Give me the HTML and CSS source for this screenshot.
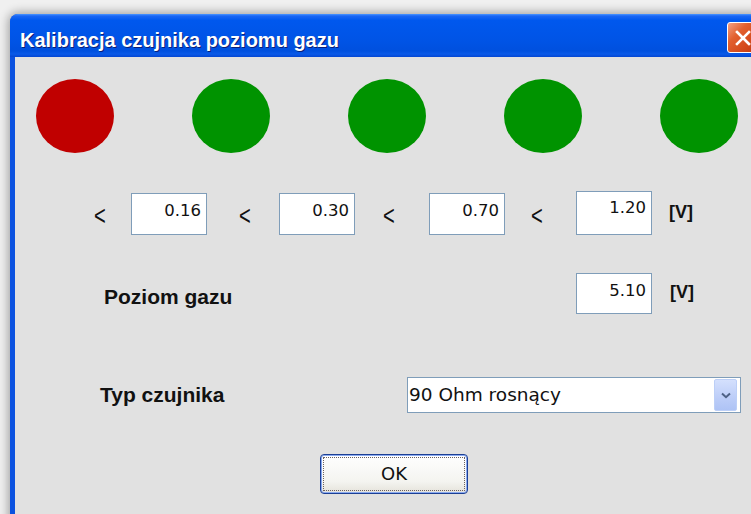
FILE: index.html
```html
<!DOCTYPE html>
<html lang="pl">
<head>
<meta charset="utf-8">
<title>Kalibracja czujnika poziomu gazu</title>
<link rel="stylesheet" href="styles.css">
</head>
<body>
<div class="window">
  <div class="titlebar">
    <span class="title">Kalibracja czujnika poziomu gazu</span>
    <button class="close" aria-label="Zamknij">
      <svg width="16" height="16" viewBox="0 0 16 16"><path d="M2 2 L14 14 M14 2 L2 14" stroke="#fff" stroke-width="2.6" stroke-linecap="square"/></svg>
    </button>
  </div>
  <div class="client">
    <div class="lamps">
      <span class="lamp lamp-alarm"></span>
      <span class="lamp lamp-ok"></span>
      <span class="lamp lamp-ok"></span>
      <span class="lamp lamp-ok"></span>
      <span class="lamp lamp-ok"></span>
    </div>

    <div class="thresholds">
      <span class="lt">&lt;</span><div class="field">0.16</div>
      <span class="lt">&lt;</span><div class="field">0.30</div>
      <span class="lt">&lt;</span><div class="field">0.70</div>
      <span class="lt">&lt;</span><div class="field field-tall">1.20</div>
      <span class="unit">[V]</span>
    </div>

    <div class="level-row">
      <span class="label">Poziom gazu</span>
      <div class="field field-level">5.10</div>
      <span class="unit unit-level">[V]</span>
    </div>

    <div class="type-row">
      <span class="label">Typ czujnika</span>
      <div class="combo">
        <span class="combo-text">90 Ohm rosnący</span>
        <span class="combo-btn">
          <svg width="10" height="7" viewBox="0 0 10 7"><path d="M1 1.5 L5 5.2 L9 1.5" fill="none" stroke="#4d6185" stroke-width="2"/></svg>
        </span>
      </div>
    </div>

    <div class="actions">
      <button class="ok"><span class="focus">OK</span></button>
    </div>
  </div>
</div>
</body>
</html>
```

FILE: styles.css
```css
html, body {
  margin: 0;
  height: 514px;
  overflow: hidden;
}

body {
  background: #f0f0f0;
}

.window {
  margin: 14px 0 0 10px;
  width: 754px;
  height: 520px;
  display: flex;
  flex-direction: column;
  background: #0b52e0;
  border-radius: 8px 8px 0 0;
  box-shadow: 0 0 10px 2px rgba(0, 0, 0, 0.32);
}

/* Luna-style caption bar */
.titlebar {
  height: 43px;
  flex: none;
  display: flex;
  align-items: flex-start;
  border-radius: 8px 8px 0 0;
  background: linear-gradient(#4a96ff 0, #1a66f4 2px, #0058ee 6px, #0054e6 26px, #0050de 37px, #0a5ae8 40px, #0446d2 43px);
}

.title {
  padding: 16px 0 0 10px;
  font: bold 20px/20px "Liberation Sans", Arial, sans-serif;
  color: #fff;
  text-shadow: 1px 1px 0 #0b1f78;
  white-space: nowrap;
}

.close {
  margin: 8px 6px 0 auto;
  width: 31px;
  height: 31px;
  padding: 0;
  display: flex;
  align-items: center;
  justify-content: center;
  border: 1px solid #fff;
  border-radius: 3px;
  background: linear-gradient(135deg, #f3a184 0, #e2602f 35%, #d44a1c 70%, #c03a12 100%);
}

.client {
  flex: 1;
  margin-left: 5px;
  background: #e1e1e1;
}

/* status lamps */
.lamps {
  display: flex;
  gap: 78px;
  padding: 22px 0 0 21px;
}

.lamp {
  width: 78px;
  height: 74px;
  border-radius: 50%;
}

.lamp-alarm { background: #c00000; }
.lamp-ok { background: #009300; }

/* threshold inputs */
.thresholds {
  display: grid;
  grid-template-columns: 36px 109px 39px 105px 45px 103px 44px 93px auto;
  align-items: start;
  height: 44px;
  margin-top: 38px;
  padding-left: 80px;
}

/* narrow, tall comparison sign */
.lt {
  justify-self: start;
  margin: 10px 0 0 -1px;
  font: 28px/30px "Liberation Sans", Arial, sans-serif;
  color: #111;
  transform: scaleX(0.72);
  transform-origin: left center;
}

.field {
  box-sizing: border-box;
  width: 76px;
  height: 42px;
  margin-top: 2px;
  padding: 7px 5px 0 0;
  border: 1px solid #7f9db9;
  background: #fff;
  text-align: right;
  font: 16.5px/20px "DejaVu Sans", Verdana, sans-serif;
  color: #111;
}

.field-tall {
  height: 44px;
  margin-top: 0;
  padding-top: 6px;
}

.unit {
  margin-top: 11px;
  font: bold 18px/20px "Liberation Sans", Arial, sans-serif;
  color: #111;
}

.label {
  font: bold 21px/24px "Liberation Sans", Arial, sans-serif;
  color: #111;
  white-space: nowrap;
}

/* measured level */
.level-row {
  display: grid;
  grid-template-columns: 472px 76px auto;
  align-items: start;
  margin-top: 38px;
  padding-left: 89px;
}

.level-row .label { margin-top: 12px; }

.field-level {
  height: 41px;
  margin-top: 0;
}

.unit-level {
  margin: 9px 0 0 18px;
}

/* sensor type */
.type-row {
  display: grid;
  grid-template-columns: 307px 334px;
  align-items: start;
  margin-top: 63px;
  padding-left: 85px;
}

.type-row .label { margin-top: 6px; }

.combo {
  box-sizing: border-box;
  height: 36px;
  display: flex;
  align-items: center;
  border: 1px solid #7f9db9;
  background: #fff;
}

.combo-text {
  flex: 1;
  padding-left: 1px;
  font: 18.5px/22px "DejaVu Sans", Verdana, sans-serif;
  color: #111;
  white-space: nowrap;
}

.combo-btn {
  box-sizing: border-box;
  width: 23px;
  height: 32px;
  margin-right: 3px;
  display: flex;
  align-items: center;
  justify-content: center;
  border: 1px solid #bccff7;
  border-radius: 2px;
  background: linear-gradient(#d4e0fd, #bccdf8 60%, #aec3f5);
}

/* dialog button */
.actions {
  margin-top: 41px;
  padding-left: 305px;
}

.ok {
  box-sizing: border-box;
  width: 148px;
  height: 40px;
  padding: 2px;
  border: 1px solid #1c3f94;
  border-radius: 4px;
  background: linear-gradient(#ffffff, #f4f4f0 70%, #e4e2da);
  box-shadow: inset 0 0 0 1px #8aaaf0;
  cursor: default;
}

.focus {
  box-sizing: border-box;
  display: flex;
  align-items: center;
  justify-content: center;
  height: 100%;
  border: 1px dotted #6a6060;
  font: 18px/20px "DejaVu Sans", Verdana, sans-serif;
  color: #111;
}
```
